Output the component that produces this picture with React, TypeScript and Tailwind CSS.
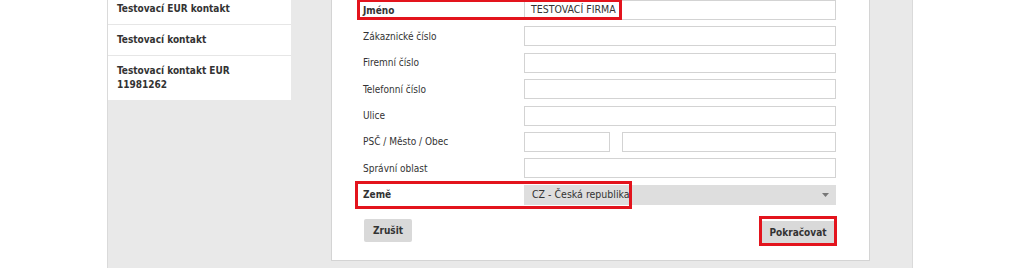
import React from "react"

const font = "font-['DejaVu_Sans_Condensed','DejaVu_Sans',sans-serif] [font-stretch:condensed]"

const contacts = ["Testovací EUR kontakt", "Testovací kontakt", "Testovací kontakt EUR 11981262"]

function Field({ label, value, bold }: { label: string; value?: string; bold?: boolean }) {
  return (
    <div className="flex items-center h-5">
      <div className={`w-[161px] text-[10px] text-[#333] ${bold ? "font-bold" : ""}`}>{label}</div>
      <div className="w-[312px] h-5 border border-[#d3d3d3] bg-white pl-[6px] flex items-center text-[10.5px] text-[#333]">
        {value}
      </div>
    </div>
  )
}

export default function App() {
  return (
    <div className={`w-[1022px] h-[268px] overflow-hidden bg-white ${font}`}>
      <div className="ml-[107px] w-[806px] h-full bg-[#e9e9e9] border-x border-[#dadada] flex items-start">
        {/* contact list */}
        <div className="w-[183px] -mt-[6px] bg-white">
          {contacts.map((c, i) => (
            <div
              key={c}
              className={`px-[9px] py-[8px] leading-[14px] text-[10px] font-bold text-[#333] ${i < contacts.length - 1 ? "border-b border-[#e6e6e6]" : ""}`}
            >
              {i === 2 ? (
                <>
                  Testovací kontakt EUR
                  <br />
                  11981262
                </>
              ) : (
                c
              )}
            </div>
          ))}
        </div>

        {/* form panel */}
        <div className="ml-[40px] w-[539px] -mt-[20px] bg-white border border-[#d4d4d4] pt-[19px] pb-[14px] pl-[31px] pr-[33px]">
          <div className="flex flex-col gap-[6.4px]">
            <div className="relative">
              <Field label="Jméno" value="TESTOVACÍ FIRMA" bold />
              <div className="absolute -left-[6px] -top-[1px] w-[265px] h-[21px] border-[3px] border-[#e3141d] pointer-events-none" />
            </div>
            <Field label="Zákaznické číslo" />
            <Field label="Firemní číslo" />
            <Field label="Telefonní číslo" />
            <Field label="Ulice" />
            <div className="flex items-center h-5">
              <div className="w-[161px] text-[10px] text-[#333]">PSČ / Město / Obec</div>
              <div className="flex gap-[12px]">
                <div className="w-[86px] h-5 border border-[#d3d3d3]" />
                <div className="w-[214px] h-5 border border-[#d3d3d3]" />
              </div>
            </div>
            <Field label="Správní oblast" />
            <div className="relative flex items-center h-5">
              <div className="w-[161px] text-[10px] text-[#333] font-bold">Země</div>
              <div className="w-[312px] h-5 bg-[#dedede] pl-[8px] pr-[7px] flex items-center justify-between text-[10.5px] text-[#333]">
                <span>CZ - Česká republika</span>
                <svg width="7" height="4" viewBox="0 0 7 4">
                  <path d="M0 0h7L3.5 4z" fill="#777" />
                </svg>
              </div>
              <div className="absolute -left-[8px] -top-[4px] w-[277px] h-[28px] border-[3px] border-[#e3141d] pointer-events-none" />
            </div>
          </div>

          <div className="mt-[11px] flex items-center justify-between">
            <button className="ml-px h-[23px] px-[9px] bg-[#d9d9d9] rounded-[2px] text-[10px] font-bold text-[#333]">
              Zrušit
            </button>
            <div className="-mr-px border-[3px] border-[#e3141d]">
              <button className="h-[22px] w-[72px] bg-[#d9d9d9] text-[10px] font-bold text-[#333]">Pokračovat</button>
            </div>
          </div>
        </div>
      </div>
    </div>
  )
}
